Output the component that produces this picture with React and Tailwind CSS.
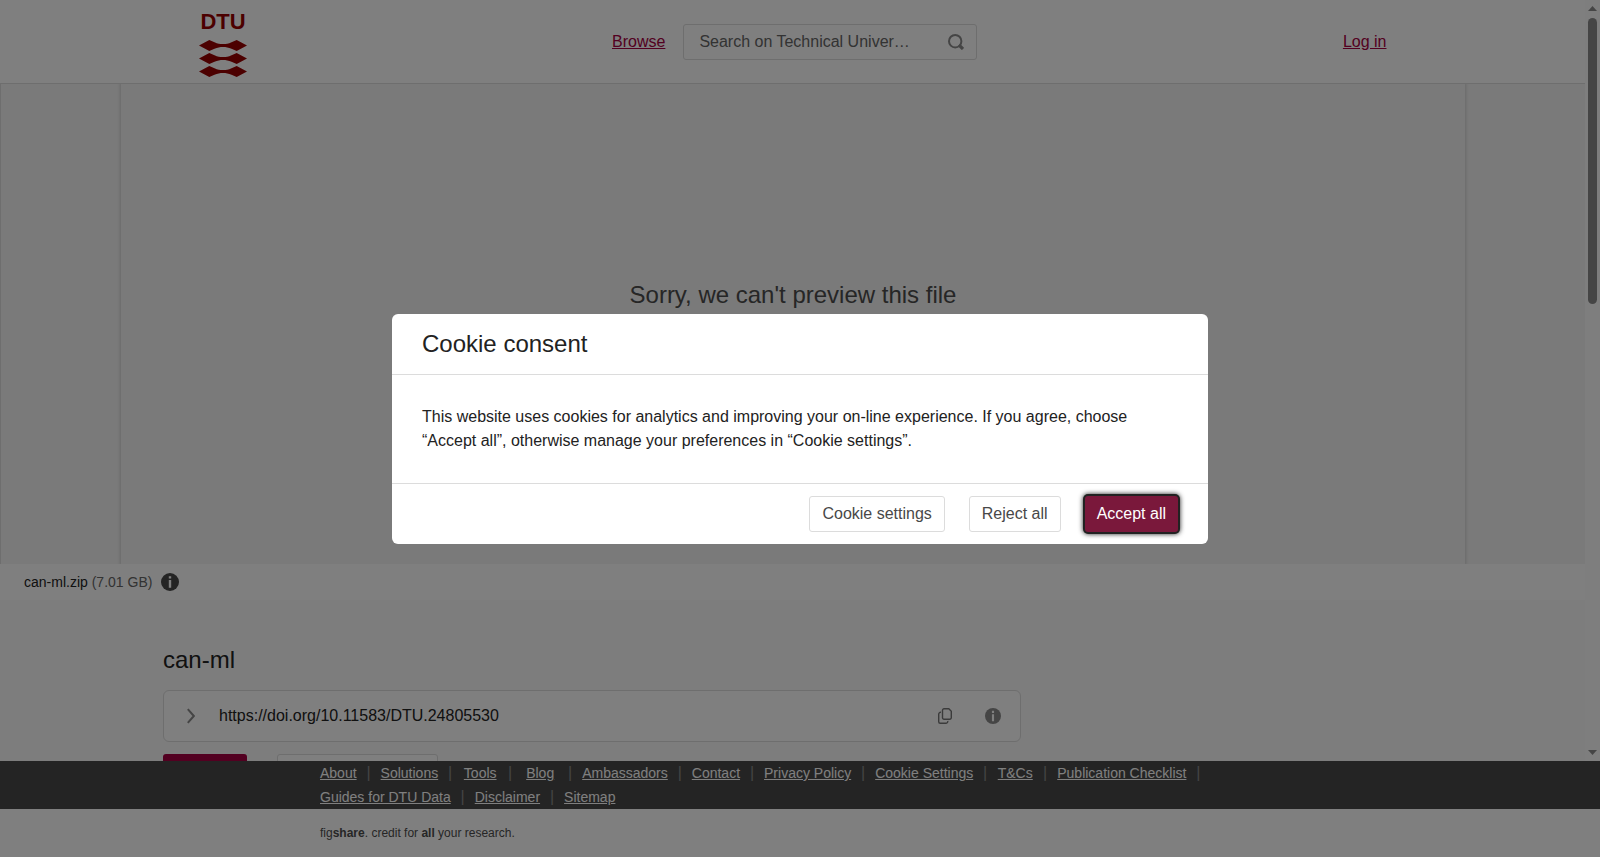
import { useState } from 'react'
import { clsx } from 'clsx'

const footerLinks = [
  'About',
  'Solutions',
  'Tools',
  'Blog',
  'Ambassadors',
  'Contact',
  'Privacy Policy',
  'Cookie Settings',
  'T&Cs',
  'Publication Checklist',
  'Guides for DTU Data',
  'Disclaimer',
  'Sitemap',
]

const wave =
  'M0 5.5 L10.3 0 L15.5 2.2 C18.5 3.6 21 4.1 24 4.1 C27 4.1 29.5 3.6 32.5 2.2 L37.7 0 L48 5.5 L37.7 11 L32.5 8.8 C29.5 7.4 27 6.9 24 6.9 C21 6.9 18.5 7.4 15.5 8.8 L10.3 11 Z'

function Logo() {
  return (
    <a href="#" aria-label="DTU" className="block text-[#990000]">
      <svg width="48" height="70" viewBox="0 0 48 70" fill="currentColor" aria-hidden="true">
        <text
          x="24"
          y="22"
          textAnchor="middle"
          className="font-['Liberation_Sans',Arial,sans-serif] text-[22px] font-bold"
        >
          DTU
        </text>
        <path d={wave} transform="translate(0 33)" />
        <path d={wave} transform="translate(0 46)" />
        <path d={wave} transform="translate(0 59)" />
      </svg>
    </a>
  )
}

function InfoIcon({ className }) {
  return (
    <svg viewBox="0 0 18 18" className={className} aria-hidden="true">
      <circle cx="9" cy="9" r="9" fill="currentColor" />
      <path d="M7.8 3.2h2.4v2.4H7.8zM7.8 7h2.4v7.8H7.8z" fill="#fff" />
    </svg>
  )
}

function SearchIcon() {
  return (
    <svg width="16" height="16" viewBox="0 0 16 16" fill="none" stroke="currentColor" aria-hidden="true">
      <circle cx="7.2" cy="7.2" r="6.2" strokeWidth="2" />
      <path d="M11 11l4 4" strokeWidth="3.2" />
    </svg>
  )
}

function CopyIcon() {
  return (
    <svg width="14" height="16" viewBox="0 0 14 16" fill="none" stroke="currentColor" strokeWidth="1.4" aria-hidden="true">
      <path d="M6 .7h4.8l2.5 2.5v6.6a1.5 1.5 0 0 1-1.5 1.5H6a1.5 1.5 0 0 1-1.5-1.5V2.2A1.5 1.5 0 0 1 6 .7z" />
      <path d="M3 4.2A2 2 0 0 0 .7 6.2v7.6a1.5 1.5 0 0 0 1.5 1.5h5.6a1.9 1.9 0 0 0 1.9-2.3" />
    </svg>
  )
}

function Header() {
  return (
    <header className="border-b border-[#dcdcdc] bg-white">
      <div className="mx-auto flex h-[83px] max-w-[1188px] items-center justify-between">
        <Logo />
        <div className="flex items-center gap-[18px]">
          <a href="#" className="text-[#a60042] underline">
            Browse
          </a>
          <form
            className="flex h-9 w-[294px] items-center rounded-[3px] border border-[#dcdcdc] pr-3 pl-[15px]"
            onSubmit={(e) => e.preventDefault()}
          >
            <input
              type="text"
              aria-label="Search"
              placeholder="Search on Technical Univer…"
              className="min-w-0 flex-1 outline-none placeholder:text-[#666]"
            />
            <button type="submit" aria-label="Submit search" className="text-[#8a8a8a]">
              <SearchIcon />
            </button>
          </form>
        </div>
        <a href="#" className="text-[#a60042] underline">
          Log in
        </a>
      </div>
    </header>
  )
}

function Preview() {
  return (
    <>
      <section className="flex h-[480px] overflow-hidden bg-[#f4f4f4]">
        <div className="w-[121px] border-l border-[#dcdcdc]" />
        <div className="flex-1 pt-[193px] text-center shadow-[0_0_3px_1px_rgba(0,0,0,0.15)]">
          <h2 className="text-2xl leading-9 text-[#4d4d4d]">Sorry, we can't preview this file</h2>
        </div>
        <div className="w-[120px]" />
      </section>
      <div className="flex h-9 items-center gap-[9px] bg-white px-6 text-sm">
        <p className="text-[#666]">
          <span className="text-[#222]">can-ml.zip</span> (7.01 GB)
        </p>
        <button aria-label="File details" className="text-[#484848]">
          <InfoIcon className="size-[18px]" />
        </button>
      </div>
    </>
  )
}

function Item() {
  return (
    <section className="px-[163px] pt-[42px]">
      <h1 className="text-2xl leading-9 text-[#222]">can-ml</h1>
      <div className="mt-3 flex h-[52px] max-w-[858px] items-center rounded-md border border-[#dcdcdc] bg-[#fefefe] pr-[19px] pl-[23px]">
        <button aria-label="Show citation" className="mr-6 text-[#8a8a8a]">
          <svg width="8" height="16" viewBox="0 0 8 16" fill="none" stroke="currentColor" strokeWidth="2" aria-hidden="true">
            <path d="M.8 1.2L6.8 8L.8 14.8" />
          </svg>
        </button>
        <span className="flex-1 text-[#222]">https://doi.org/10.11583/DTU.24805530</span>
        <button aria-label="Copy DOI" className="mr-[33px] text-[#777]">
          <CopyIcon />
        </button>
        <button aria-label="DOI information" className="text-[#8a8a8a]">
          <InfoIcon className="size-4" />
        </button>
      </div>
      <div className="mt-3 flex gap-[30px]">
        <button aria-label="Cite" className="h-9 w-[84px] rounded-[3px] bg-[#a60042]" />
        <button aria-label="Download all" className="h-9 w-[161px] rounded-[3px] border border-[#dcdcdc] bg-[#fefefe]" />
      </div>
    </section>
  )
}

function ScrollTrack() {
  return (
    <div className="flex w-[15px] shrink-0 flex-col items-center bg-[#fcfcfc] py-[6px] text-[#8b8b8b]" aria-hidden="true">
      <svg width="9" height="5" viewBox="0 0 9 5" fill="currentColor">
        <path d="M4.5 0L9 5H0z" />
      </svg>
      <div className="mt-[7px] h-[286px] w-[9px] rounded-full bg-current" />
      <svg className="mt-auto" width="9" height="5" viewBox="0 0 9 5" fill="currentColor">
        <path d="M0 0h9L4.5 5z" />
      </svg>
    </div>
  )
}

function Footer() {
  return (
    <footer>
      <div className="bg-[#484848]">
        <div className="mx-auto max-w-[960px]">
          <ul className="-mx-3 flex flex-wrap text-sm leading-6 text-white">
            {footerLinks.map((label, i) => (
              <li
                key={label}
                className={clsx(
                  'relative min-w-[60px] px-3 text-center',
                  i < footerLinks.length - 1 &&
                    "after:absolute after:top-0 after:-right-[2px] after:text-base after:leading-6 after:text-[#8a8a8a] after:content-['|']"
                )}
              >
                <a href="#" className="underline">
                  {label}
                </a>
              </li>
            ))}
          </ul>
        </div>
      </div>
      <div className="bg-white">
        <p className="mx-auto max-w-[960px] text-xs leading-[48px] text-[#4d4d4d]">
          fig<b>share</b>. credit for <b>all</b> your research.
        </p>
      </div>
    </footer>
  )
}

function CookieDialog({ onClose }) {
  const plain = 'h-9 rounded-[3px] border border-[#dcdcdc] px-3 text-[#484848]'

  return (
    <div className="fixed inset-0 z-50 flex items-center justify-center bg-black/50">
      <div role="dialog" aria-modal="true" aria-labelledby="cookie-title" className="w-full max-w-[816px] rounded-md bg-white text-[#222]">
        <h2 id="cookie-title" className="border-b border-[#dcdcdc] px-[30px] text-2xl leading-[60px]">
          Cookie consent
        </h2>
        <p className="p-[30px] leading-6">
          This website uses cookies for analytics and improving your on-line experience. If you agree, choose “Accept
          all”, otherwise manage your preferences in “Cookie settings”.
        </p>
        <div className="flex justify-end gap-6 border-t border-[#dcdcdc] px-[30px] py-3">
          <button className={plain}>Cookie settings</button>
          <button className={plain} onClick={onClose}>
            Reject all
          </button>
          <button
            className="h-9 rounded-[3px] bg-[#7a183b] px-3 text-white shadow-[0_0_0_2px_#222,0_0_5px_2px_#222]"
            onClick={onClose}
          >
            Accept all
          </button>
        </div>
      </div>
    </div>
  )
}

export default function App() {
  const [consentOpen, setConsentOpen] = useState(true)

  return (
    <div className="flex h-screen flex-col overflow-hidden font-['Liberation_Sans',Arial,sans-serif] text-base">
      <div className="flex min-h-0 flex-1">
        <main className="min-w-0 flex-1 overflow-hidden bg-[#fafafa]">
          <Header />
          <Preview />
          <Item />
        </main>
        <ScrollTrack />
      </div>
      <Footer />
      {consentOpen && <CookieDialog onClose={() => setConsentOpen(false)} />}
    </div>
  )
}
